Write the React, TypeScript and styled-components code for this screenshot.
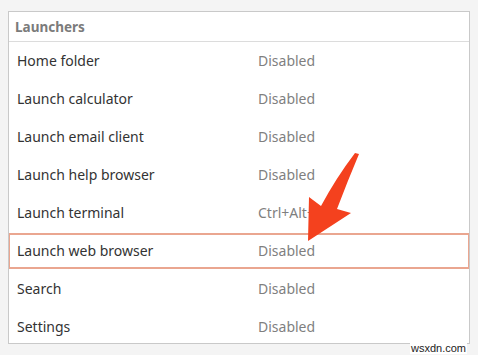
import React from 'react';
import styled, {createGlobalStyle} from 'styled-components';

const GlobalStyle = createGlobalStyle`
    html, body {
        margin: 0;
        padding: 0;
        background: #f4f4f4;
        font-family: "Noto Sans", "Open Sans", sans-serif;
    }
`

const Page = styled.div`
    position: relative;
    width: 478px;
    height: 355px;
    padding: 11px 8px 0 8px;
    box-sizing: border-box;
`

const Panel = styled.div`
    height: 333px;
    background: #ffffff;
    border: 1px solid #c9c9c9;
    box-sizing: border-box;
    overflow: hidden;
`

const Header = styled.div`
    height: 30px;
    display: flex;
    align-items: center;
    padding-left: 6px;
    border-bottom: 1px solid #dcdcdc;
    color: #7b7b7b;
    font-size: 13.5px;
    font-weight: 700;
    box-sizing: border-box;
`

const Row = styled.div<{ $active?: boolean }>`
    height: ${p => p.$active ? '36px' : '38px'};
    margin: ${p => p.$active ? '1px -1px' : '0'};
    display: grid;
    grid-template-columns: 241px 1fr;
    align-items: center;
    padding: 0 0 2px ${p => p.$active ? '7px' : '6px'};
    box-sizing: border-box;
    font-size: 14px;
    border: 2px solid ${p => p.$active ? '#eaa690' : 'transparent'};
`

const Name = styled.span`
    color: #333333;
`

const Value = styled.span`
    color: #7f7f7f;
`

const Arrow = styled.svg`
    position: absolute;
    left: 0;
    top: 0;
    pointer-events: none;
`

const Watermark = styled.div`
    position: absolute;
    right: 11px;
    bottom: 1px;
    font-family: "Liberation Sans", Arial, sans-serif;
    font-size: 11px;
    color: #222222;
    background: #ffffff;
    padding: 0 1px;
    line-height: 11px;
`

const rows = [
    {name: 'Home folder', value: 'Disabled'},
    {name: 'Launch calculator', value: 'Disabled'},
    {name: 'Launch email client', value: 'Disabled'},
    {name: 'Launch help browser', value: 'Disabled'},
    {name: 'Launch terminal', value: 'Ctrl+Alt+T'},
    {name: 'Launch web browser', value: 'Disabled', active: true},
    {name: 'Search', value: 'Disabled'},
    {name: 'Settings', value: 'Disabled'},
]

function App() {
    return (
        <Page>
            <GlobalStyle/>
            <Panel>
                <Header>Launchers</Header>
                {rows.map(r => (
                    <Row key={r.name} $active={r.active}>
                        <Name>{r.name}</Name>
                        <Value>{r.value}</Value>
                    </Row>
                ))}
            </Panel>
            <Arrow width="478" height="355" viewBox="0 0 478 355">
                <path
                    d="M359,154 Q348,180 337,209 L351,213 L308,241 L309,197 L321,206 Q336,178 355,153 Z"
                    fill="#f4411e"
                />
            </Arrow>
            <Watermark>wsxdn.com</Watermark>
        </Page>
    );
}

export default App;
